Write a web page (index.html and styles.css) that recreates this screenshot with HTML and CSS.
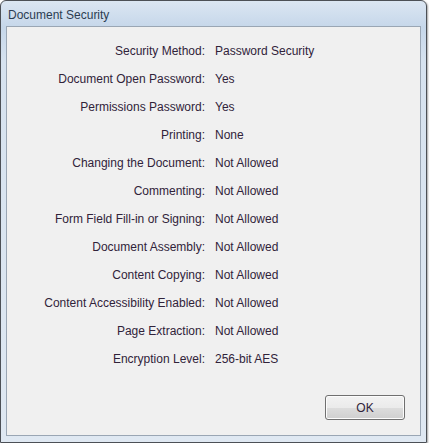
FILE: index.html
```html
<!DOCTYPE html>
<html>
<head>
<meta charset="utf-8">
<link rel="stylesheet" href="styles.css">
</head>
<body>
<div class="window">
  <div class="titlebar">Document Security</div>
  <div class="panel">
    <div class="props">
      <div class="label">Security Method:</div><div class="value">Password Security</div>
      <div class="label">Document Open Password:</div><div class="value">Yes</div>
      <div class="label">Permissions Password:</div><div class="value">Yes</div>
      <div class="label">Printing:</div><div class="value">None</div>
      <div class="label">Changing the Document:</div><div class="value">Not Allowed</div>
      <div class="label">Commenting:</div><div class="value">Not Allowed</div>
      <div class="label">Form Field Fill-in or Signing:</div><div class="value">Not Allowed</div>
      <div class="label">Document Assembly:</div><div class="value">Not Allowed</div>
      <div class="label">Content Copying:</div><div class="value">Not Allowed</div>
      <div class="label">Content Accessibility Enabled:</div><div class="value">Not Allowed</div>
      <div class="label">Page Extraction:</div><div class="value">Not Allowed</div>
      <div class="label">Encryption Level:</div><div class="value">256-bit AES</div>
    </div>
    <div class="actions">
      <button class="btn">OK</button>
    </div>
  </div>
</div>
</body>
</html>
```
FILE: styles.css
```css
html, body {
  margin: 0;
  padding: 0;
  background: #ffffff;
}
body {
  font-family: "Liberation Sans", Arial, sans-serif;
  font-size: 12px;
}
.window {
  width: 415px;
  height: 435px;
  border: 1px solid #4c5056;
  border-radius: 6px 6px 0 0;
  background: linear-gradient(#dbe6f2 0px, #c6d7ea 26px, #d6e2ef 60px, #dfe8f2 100%);
  box-shadow: 1px 1px 2px rgba(0, 0, 0, 0.35);
  display: flex;
  flex-direction: column;
  padding: 0 5px 6px 5px;
}
.titlebar {
  height: 27px;
  line-height: 32px;
  padding-left: 2px;
  color: #2c3d52;
  font-size: 12px;
  margin-top: -2px;
}
.panel {
  flex: 1;
  background: #f0f0f0;
  border: 1px solid #9aa6b4;
  display: flex;
  flex-direction: column;
}
.props {
  display: grid;
  grid-template-columns: 198px 1fr;
  column-gap: 10px;
  padding-top: 10px;
}
.label {
  text-align: right;
  line-height: 28px;
  color: #30233a;
  white-space: nowrap;
}
.value {
  line-height: 28px;
  color: #30233a;
  white-space: nowrap;
}
.actions {
  display: flex;
  justify-content: flex-end;
  padding-right: 15px;
  margin-top: auto;
  padding-bottom: 15px;
}
.btn {
  width: 80px;
  height: 25px;
  border: 1px solid #707070;
  border-radius: 3px;
  background: linear-gradient(#f2f2f2 0%, #ebebeb 50%, #dddddd 51%, #cfcfcf 100%);
  font-family: "Liberation Sans", Arial, sans-serif;
  font-size: 12px;
  color: #30233a;
  padding: 0;
  box-shadow: inset 0 0 0 1px #fcfcfc;
}
```
